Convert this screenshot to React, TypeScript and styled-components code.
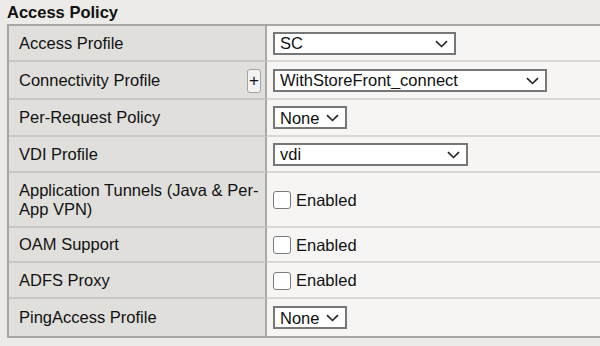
import React from "react";
import styled, { createGlobalStyle } from "styled-components";

const GlobalStyle = createGlobalStyle`
  html, body {
    margin: 0;
    padding: 0;
    background: #ecebe7;
    overflow: hidden;
  }
  body {
    font-family: "Liberation Sans", Arial, sans-serif;
    color: #111;
  }
`;

const Page = styled.div`
  width: 600px;
  height: 346px;
  padding: 2px 0 0 7px;
  box-sizing: border-box;
`;

const Title = styled.h2`
  margin: 0 0 2px 0;
  font-size: 16.5px;
  line-height: 20px;
  font-weight: bold;
  color: #111;
`;

const Table = styled.div`
  display: grid;
  grid-template-columns: 258px 1fr;
  width: 100%;
  border: 2px solid #a6a6a6;
  border-right: none;
  font-size: 16.5px;
  line-height: 19px;
`;

const Label = styled.div<{ $h: number; $last?: boolean }>`
  height: ${(p) => p.$h}px;
  box-sizing: border-box;
  display: flex;
  align-items: center;
  justify-content: space-between;
  padding: 0 4px 0 10px;
  background: #e0dfdc;
  border-right: 2px solid #aaa9a6;
  border-bottom: ${(p) => (p.$last ? "none" : "2px solid #c9c8c5")};
`;

const Value = styled.div<{ $h: number; $last?: boolean }>`
  height: ${(p) => p.$h}px;
  box-sizing: border-box;
  display: flex;
  align-items: center;
  padding: 0 6px;
  background: #f6f5f3;
  border-bottom: ${(p) => (p.$last ? "none" : "2px solid #d8d7d4")};
`;

const PlusButton = styled.button`
  width: 14px;
  height: 24px;
  padding: 0;
  margin-top: 2px;
  border: 1px solid #a3a3a3;
  border-radius: 3px;
  background: #f3f3f3;
  font-family: "Liberation Sans", Arial, sans-serif;
  font-size: 17px;
  line-height: 20px;
  color: #111;
`;

const SelectWrap = styled.div<{ $w: number }>`
  position: relative;
  width: ${(p) => p.$w}px;
  height: 23px;
`;

const NativeSelect = styled.select`
  appearance: none;
  -webkit-appearance: none;
  width: 100%;
  height: 100%;
  box-sizing: border-box;
  margin: 0;
  padding: 0 0 0 5px;
  border: 2px solid #777;
  border-radius: 0;
  background: #fff;
  font-family: "Liberation Sans", Arial, sans-serif;
  font-size: 16.5px;
  color: #111;
  outline: none;
`;

const Chevron = styled.svg`
  position: absolute;
  right: 8px;
  top: 8px;
  pointer-events: none;
`;

const CheckRow = styled.label`
  display: flex;
  align-items: center;
  gap: 5px;
  margin-top: 1px;
`;

const Check = styled.input`
  appearance: none;
  -webkit-appearance: none;
  width: 18px;
  height: 18px;
  margin: 0;
  border: 1px solid #7c7c7c;
  border-radius: 3px;
  background: #fff;
`;

const Select = ({ value, width }: { value: string; width: number }) => (
  <SelectWrap $w={width}>
    <NativeSelect defaultValue={value}>
      <option>{value}</option>
    </NativeSelect>
    <Chevron width="13" height="8" viewBox="0 0 13 8">
      <path d="M1 1.2 L6.5 6.5 L12 1.2" fill="none" stroke="#222" strokeWidth="1.6" />
    </Chevron>
  </SelectWrap>
);

const Enabled = () => (
  <CheckRow>
    <Check type="checkbox" />
    Enabled
  </CheckRow>
);

type RowDef = {
  label: string;
  h: number;
  plus?: boolean;
  control: React.ReactNode;
};

const rows: RowDef[] = [
  { label: "Access Profile", h: 36, control: <Select value="SC" width={183} /> },
  {
    label: "Connectivity Profile",
    h: 38,
    plus: true,
    control: <Select value="WithStoreFront_connect" width={274} />,
  },
  { label: "Per-Request Policy", h: 37, control: <Select value="None" width={74} /> },
  { label: "VDI Profile", h: 36, control: <Select value="vdi" width={195} /> },
  { label: "Application Tunnels (Java & Per-App VPN)", h: 55, control: <Enabled /> },
  { label: "OAM Support", h: 35, control: <Enabled /> },
  { label: "ADFS Proxy", h: 36, control: <Enabled /> },
  { label: "PingAccess Profile", h: 37, control: <Select value="None" width={74} /> },
];

export default function App() {
  return (
    <>
      <GlobalStyle />
      <Page>
        <Title>Access Policy</Title>
        <Table>
          {rows.map((r, i) => {
            const last = i === rows.length - 1;
            return (
              <React.Fragment key={r.label}>
                <Label $h={r.h} $last={last}>
                  <span>{r.label}</span>
                  {r.plus && <PlusButton>+</PlusButton>}
                </Label>
                <Value $h={r.h} $last={last}>
                  {r.control}
                </Value>
              </React.Fragment>
            );
          })}
        </Table>
      </Page>
    </>
  );
}
